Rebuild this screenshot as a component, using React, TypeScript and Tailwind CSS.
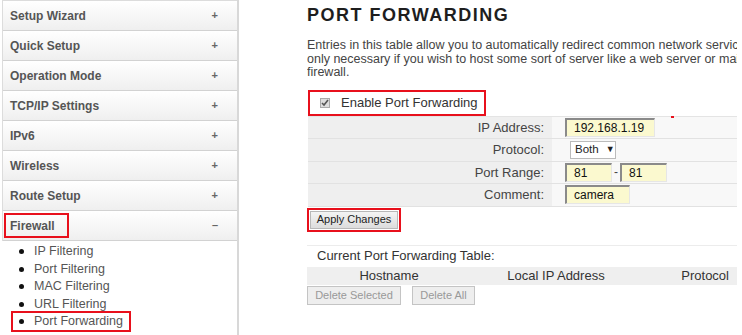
import React from "react";

const font = { fontFamily: '"Liberation Sans", Arial, sans-serif' };

function MenuItem({ label, open, boxed }: { label: string; open?: boolean; boxed?: boolean }) {
  return (
    <div className="h-[30px] flex items-center justify-between border-b border-[#d2d2d2] bg-gradient-to-b from-[#ffffff] to-[#efefef] pl-[7px] pr-[19px]">
      {boxed ? (
        <span className="border-2 border-[#e8101c] w-[65px] h-[25px] flex items-center px-[4px] -ml-[6px] text-[12px] font-bold text-[#555]">{label}</span>
      ) : (
        <span className="text-[12px] font-bold text-[#555]">{label}</span>
      )}
      <span className="text-[11px] font-bold text-[#666] leading-none">{open ? "–" : "+"}</span>
    </div>
  );
}

function SubItem({ label, boxed }: { label: string; boxed?: boolean }) {
  const inner = (
    <>
      <span className="w-[5px] h-[5px] rounded-full bg-[#111] inline-block" />
      <span className="ml-[10px] text-[12.5px] text-[#555]">{label}</span>
    </>
  );
  return (
    <div className="h-[17.5px] flex items-center pl-[19px]">
      {boxed ? (
        <span className="flex items-center border-2 border-[#e8101c] h-[21px] -ml-[8px] pl-[6px] pr-[6px]">{inner}</span>
      ) : (
        inner
      )}
    </div>
  );
}

function YInput({ value, w }: { value: string; w: string }) {
  return (
    <div className={`${w} h-[19px] bg-[#fbf9cf] border-l-2 border-t-2 border-[#8a8a8a] border-r border-b border-r-[#e6e6e6] border-b-[#e6e6e6] flex items-center pl-[7px] text-[12px] text-[#111]`}>
      {value}
    </div>
  );
}

function Row({ label, children }: { label: string; children: React.ReactNode }) {
  return (
    <div className="flex h-[22.5px] border-b border-[#e2e2e2]">
      <div className="w-[244px] bg-[#efefef] flex items-center justify-end pr-[8px] text-[13px] text-[#444]">{label}</div>
      <div className="flex-1 bg-[#f8f8f8] flex items-center pl-[13px]">{children}</div>
    </div>
  );
}

export default function App() {
  return (
    <div className="w-[742px] h-[335px] bg-white flex overflow-hidden" style={font}>
      <div className="w-[239px] shrink-0 border-r-2 border-[#d8d8d8] h-full">
        <div className="ml-[2px] border-l border-t border-[#dcdcdc]">
          <MenuItem label="Setup Wizard" />
          <MenuItem label="Quick Setup" />
          <MenuItem label="Operation Mode" />
          <MenuItem label="TCP/IP Settings" />
          <MenuItem label="IPv6" />
          <MenuItem label="Wireless" />
          <MenuItem label="Route Setup" />
          <MenuItem label="Firewall" open boxed />
        </div>
        <div className="pt-[2px]">
          <SubItem label="IP Filtering" />
          <SubItem label="Port Filtering" />
          <SubItem label="MAC Filtering" />
          <SubItem label="URL Filtering" />
          <SubItem label="Port Forwarding" boxed />
        </div>
      </div>

      <div className="w-[430px] shrink-0 ml-[68px] min-w-0 overflow-hidden pt-[4px]">
        <h1 className="text-[18px] font-bold tracking-[1.5px] text-[#1e1e1e] leading-[22px]">PORT FORWARDING</h1>
        <p className="mt-[13px] text-[12.5px] leading-[13.5px] text-[#444] whitespace-nowrap">
          Entries in this table allow you to automatically redirect common network services
          <br />
          only necessary if you wish to host some sort of server like a web server or mail
          <br />
          firewall.
        </p>

        <div className="mt-[10px] ml-[1px] flex items-end border-b border-[#e4e4e4]">
          <div className="w-[178px] h-[26px] border-2 border-[#e8101c] flex items-center pl-[10px]">
            <span className="w-[10px] h-[10px] bg-[#ddd] border border-[#aaa] flex items-center justify-center">
              <svg width="8" height="8" viewBox="0 0 8 8"><path d="M1 4 L3 6 L7 1" stroke="#555" strokeWidth="1.6" fill="none" /></svg>
            </span>
            <span className="ml-[11px] text-[13px] text-[#333]">Enable Port Forwarding</span>
          </div>
          <div className="flex-1 relative">
            <span className="absolute left-[185px] -bottom-[2px] w-[3px] h-[2px] bg-[#e8101c]" />
          </div>
        </div>

        <div className="ml-[1px]">
          <Row label="IP Address:">
            <YInput value="192.168.1.19" w="w-[90px]" />
          </Row>
          <Row label="Protocol:">
            <div className="ml-[5px] w-[46px] h-[18px] bg-white border border-[#bbb] flex items-center pl-[4px] text-[11.5px] text-[#222]">
              Both <span className="ml-[7px] text-[9px]">▼</span>
            </div>
          </Row>
          <Row label="Port Range:">
            <YInput value="81" w="w-[47px]" />
            <span className="mx-[2px] text-[12px] text-[#444]">-</span>
            <YInput value="81" w="w-[47px]" />
          </Row>
          <Row label="Comment:">
            <YInput value="camera" w="w-[65px]" />
          </Row>
        </div>

        <div className="mt-[1px] w-[94px] h-[24px] border-2 border-[#e8101c] flex items-center justify-center">
          <div className="w-[88px] h-[18px] bg-gradient-to-b from-[#f4f4f4] to-[#dcdcdc] border border-[#b8b8b8] flex items-center justify-center text-[11px] text-[#222]">
            Apply Changes
          </div>
        </div>

        <div className="mt-[13px] border-t border-[#ececec] pt-[1px]">
          <div className="pl-[10px] h-[18px] flex items-center text-[13px] text-[#333]">Current Port Forwarding Table:</div>
          <div className="mt-[2px] h-[18px] bg-[#efefef] flex items-center text-[13px] text-[#333]">
            <span className="w-[164px] text-center">Hostname</span>
            <span className="w-[170px] text-center">Local IP Address</span>
            <span className="flex-1 text-right pr-[8px]">Protocol</span>
          </div>
          <div className="mt-[1px] flex gap-[11px]">
            <div className="w-[94px] h-[19px] bg-[#eeeeee] border border-[#c4c4c4] flex items-center justify-center text-[11px] text-[#999]">Delete Selected</div>
            <div className="w-[63px] h-[19px] bg-[#eeeeee] border border-[#c4c4c4] flex items-center justify-center text-[11px] text-[#999]">Delete All</div>
          </div>
        </div>
      </div>
    </div>
  );
}
